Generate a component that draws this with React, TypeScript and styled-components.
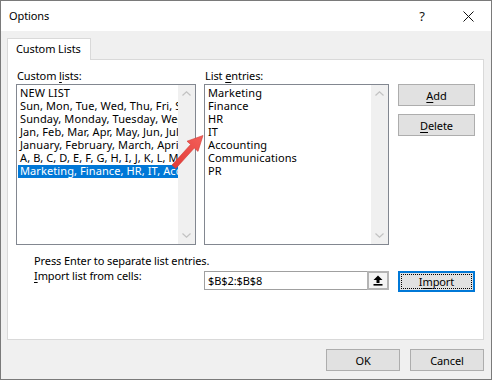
import React from "react";
import styled, { createGlobalStyle } from "styled-components";

const Global = createGlobalStyle`
  html, body { margin: 0; padding: 0; background: #fff; }
  body {
    font-family: "Noto Sans", "Liberation Sans", sans-serif;
    font-size: 11px;
    letter-spacing: -0.1px;
    color: #000;
  }
  * { box-sizing: border-box; }
`;

const Window = styled.div`
  position: relative;
  width: 492px;
  height: 380px;
  border: 1px solid #7a7a7a;
  display: flex;
  flex-direction: column;
  background: #f0f0f0;
  overflow: hidden;
`;

const TitleBar = styled.div`
  flex: none;
  height: 30px;
  background: #fff;
  display: flex;
  align-items: stretch;
`;

const Title = styled.div`
  flex: 1;
  padding-left: 8px;
  font-size: 11px;
  line-height: 30px;
`;

const CaptionButton = styled.div`
  width: 46px;
  display: flex;
  align-items: center;
  justify-content: center;
  font-size: 13px;
  color: #111;
`;

const Body = styled.div`
  flex: 1;
  display: flex;
  flex-direction: column;
  padding: 7px 7px 0 6px;
`;

const TabStrip = styled.div`
  display: flex;
`;

const Tab = styled.div`
  position: relative;
  z-index: 1;
  width: 84px;
  height: 22px;
  margin-bottom: -1px;
  padding-left: 8px;
  line-height: 19px;
  background: #fff;
  border: 1px solid #d9d9d9;
  border-bottom: none;
`;

const Panel = styled.div`
  width: 477px;
  height: 281px;
  background: #fff;
  border: 1px solid #d9d9d9;
  padding: 8px 0 0 8px;
  display: flex;
  flex-direction: column;
`;

const TopSection = styled.div`
  display: flex;
  align-items: flex-start;
`;

const Column = styled.div<{ $w: number; $ml?: number; $pt?: number }>`
  width: ${(p) => p.$w}px;
  margin-left: ${(p) => p.$ml ?? 0}px;
  padding-top: ${(p) => p.$pt ?? 0}px;
  display: flex;
  flex-direction: column;
`;

const Label = styled.div`
  line-height: 16px;
  height: 16px;
  padding-left: 1px;
`;

const U = styled.span`
  text-decoration: underline;
  text-underline-offset: 2px;
  text-decoration-thickness: 1px;
`;

const ListBox = styled.div`
  height: 161px;
  border: 1px solid #828790;
  background: #fff;
  display: flex;
`;

const Items = styled.div`
  flex: 1;
  min-width: 0;
  padding: 2px 0 0 1px;
  overflow: hidden;
  letter-spacing: 0.1px;
`;

const Item = styled.div<{ $sel?: boolean }>`
  height: 13px;
  line-height: 12px;
  padding-left: 2px;
  white-space: nowrap;
  overflow: hidden;
  background: ${(p) => (p.$sel ? "#0078d7" : "transparent")};
  color: ${(p) => (p.$sel ? "#fff" : "#000")};
`;

const ScrollBar = styled.div`
  width: 17px;
  flex: none;
  background: #f0f0f0;
  display: flex;
  flex-direction: column;
  justify-content: space-between;
`;

const ScrollArrow = styled.div`
  height: 17px;
  display: flex;
  align-items: center;
  justify-content: center;
`;

const Button = styled.div<{ $w?: number; $h?: number; $focus?: boolean }>`
  width: ${(p) => p.$w ?? 77}px;
  height: ${(p) => p.$h ?? 22}px;
  background: #e1e1e1;
  border: ${(p) => (p.$focus ? "2px solid #0078d7" : "1px solid #adadad")};
  display: flex;
  align-items: center;
  justify-content: center;
  padding: ${(p) => (p.$focus ? "1px" : "0")};
`;

const FocusRect = styled.div`
  flex: 1;
  align-self: stretch;
  border: 1px dotted #000;
  display: flex;
  align-items: center;
  justify-content: center;
`;

const ButtonStack = styled.div`
  display: flex;
  flex-direction: column;
  gap: 8px;
`;

const Hint = styled.div`
  margin-top: 8px;
  padding-left: 18px;
  line-height: 15px;
`;

const ImportRow = styled.div`
  display: flex;
  align-items: flex-start;
`;

const ImportLabel = styled.div`
  width: 188px;
  padding-left: 18px;
  line-height: 15px;
`;

const RefInput = styled.div`
  width: 185px;
  height: 19px;
  margin-top: 3px;
  border: 1px solid #a0a0a0;
  background: #fff;
  display: flex;
  align-items: stretch;
`;

const RefText = styled.div`
  flex: 1;
  padding-left: 3px;
  line-height: 17px;
`;

const RefButton = styled.div`
  width: 22px;
  margin: -1px -1px -1px 0;
  border: 2px solid #b4b4b4;
  background: #f4f4f4;
  display: flex;
  align-items: center;
  justify-content: center;
`;

const ImportButtonWrap = styled.div`
  margin-top: 3px;
  margin-left: 9px;
`;

const Footer = styled.div`
  display: flex;
  justify-content: flex-end;
  gap: 10px;
  margin-top: 9px;
`;

const Overlay = styled.svg`
  position: absolute;
  left: -1px;
  top: -1px;
  width: 492px;
  height: 380px;
  pointer-events: none;
`;

const ChevronUp = () => (
  <svg width="9" height="5" viewBox="0 0 9 5">
    <path d="M0.5 4.5 L4.5 0.8 L8.5 4.5" fill="none" stroke="#c2c2c2" strokeWidth="1.2" />
  </svg>
);

const ChevronDown = () => (
  <svg width="9" height="5" viewBox="0 0 9 5">
    <path d="M0.5 0.5 L4.5 4.2 L8.5 0.5" fill="none" stroke="#c2c2c2" strokeWidth="1.2" />
  </svg>
);

const Scroll = () => (
  <ScrollBar>
    <ScrollArrow>
      <ChevronUp />
    </ScrollArrow>
    <ScrollArrow>
      <ChevronDown />
    </ScrollArrow>
  </ScrollBar>
);

const customLists = [
  "NEW LIST",
  "Sun, Mon, Tue, Wed, Thu, Fri, Sat",
  "Sunday, Monday, Tuesday, Wednesday, Thursday, Friday, Saturday",
  "Jan, Feb, Mar, Apr, May, Jun, Jul, Aug, Sep, Oct, Nov, Dec",
  "January, February, March, April, May, June, July, August",
  "A, B, C, D, E, F, G, H, I, J, K, L, M, N, O, P",
  "Marketing, Finance, HR, IT, Accounting, Communications, PR",
];

const entries = ["Marketing", "Finance", "HR", "IT", "Accounting", "Communications", "PR"];

export default function App() {
  return (
    <>
      <Global />
      <Window>
        <TitleBar>
          <Title>Options</Title>
          <CaptionButton>?</CaptionButton>
          <CaptionButton>
            <svg width="11" height="11" viewBox="0 0 11 11">
              <path d="M0.5 0.5 L10.5 10.5 M10.5 0.5 L0.5 10.5" stroke="#111" strokeWidth="1" />
            </svg>
          </CaptionButton>
        </TitleBar>
        <Body>
          <TabStrip>
            <Tab>Custom Lists</Tab>
          </TabStrip>
          <Panel>
            <TopSection>
              <Column $w={180}>
                <Label>
                  Custom <U>l</U>ists:
                </Label>
                <ListBox>
                  <Items>
                    {customLists.map((t, i) => (
                      <Item key={t} $sel={i === customLists.length - 1}>
                        {t}
                      </Item>
                    ))}
                  </Items>
                  <Scroll />
                </ListBox>
              </Column>
              <Column $w={185} $ml={8}>
                <Label>
                  List <U>e</U>ntries:
                </Label>
                <ListBox>
                  <Items>
                    {entries.map((t) => (
                      <Item key={t}>{t}</Item>
                    ))}
                  </Items>
                  <Scroll />
                </ListBox>
              </Column>
              <Column $w={77} $ml={9} $pt={16}>
                <ButtonStack>
                  <Button>
                    <span>
                      <U>A</U>dd
                    </span>
                  </Button>
                  <Button>
                    <span>
                      <U>D</U>elete
                    </span>
                  </Button>
                </ButtonStack>
              </Column>
            </TopSection>
            <Hint>Press Enter to separate list entries.</Hint>
            <ImportRow>
              <ImportLabel>
                <U>I</U>mport list from cells:
              </ImportLabel>
              <RefInput>
                <RefText>$B$2:$B$8</RefText>
                <RefButton>
                  <svg width="10" height="11" viewBox="0 0 10 11">
                    <path d="M5 0.5 L9.5 5 L6.5 5 L6.5 8 L3.5 8 L3.5 5 L0.5 5 Z" fill="#000" />
                    <rect x="0.5" y="9" width="9" height="1.6" fill="#000" />
                  </svg>
                </RefButton>
              </RefInput>
              <ImportButtonWrap>
                <Button $focus $h={21}>
                  <FocusRect>
                    <span>
                      I<U>m</U>port
                    </span>
                  </FocusRect>
                </Button>
              </ImportButtonWrap>
            </ImportRow>
          </Panel>
          <Footer>
            <Button $w={74}>OK</Button>
            <Button $w={74}>Cancel</Button>
          </Footer>
        </Body>
        <Overlay viewBox="0 0 492 380">
          <defs>
            <linearGradient id="arr" x1="0" y1="1" x2="1" y2="0">
              <stop offset="0" stopColor="#e23a36" />
              <stop offset="1" stopColor="#f4605a" />
            </linearGradient>
          </defs>
          <polygon
            points="172,165 190.6,144.5 187,141.2 203,135.5 198,151.4 194.3,148 175.8,168.5"
            fill="url(#arr)"
            stroke="#d03a36"
            strokeWidth="0.6"
            strokeLinejoin="round"
          />
        </Overlay>
      </Window>
    </>
  );
}
